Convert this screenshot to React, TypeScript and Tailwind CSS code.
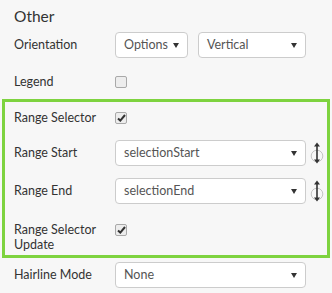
const font = { fontFamily: 'Lato, "Open Sans", "Liberation Sans", sans-serif' };

function Caret() {
  return (
    <svg width="6" height="5" viewBox="0 0 6 5" className="shrink-0">
      <polygon points="0,0 6,0 3,5" fill="#333" />
    </svg>
  );
}

function Select({ value, className }: { value: string; className: string }) {
  return (
    <div
      className={`flex h-[26px] items-center justify-between rounded-[4px] border border-[#cccccc] bg-white pl-[8px] pr-[8px] text-[12.5px] text-[#555] ${className}`}
    >
      <span>{value}</span>
      <Caret />
    </div>
  );
}

function Check({ checked }: { checked?: boolean }) {
  return (
    <div className="flex h-[12px] w-[12px] items-center justify-center rounded-[2px] border border-[#a9a9a9] bg-[#ededed]">
      {checked && (
        <svg width="9" height="8" viewBox="0 0 9 8">
          <path d="M1 4.5 L3.3 6.6 L8 1" stroke="#333" strokeWidth="2" fill="none" />
        </svg>
      )}
    </div>
  );
}

function SwapIcon() {
  return (
    <svg width="16" height="22" viewBox="0 0 16 22" className="ml-[3px] shrink-0">
      <circle cx="8" cy="14" r="5.8" fill="none" stroke="#c4c4c4" strokeWidth="1" />
      <line x1="8" y1="3" x2="8" y2="19" stroke="#333" strokeWidth="1.6" />
      <polygon points="5,4.5 11,4.5 8,0.5" fill="#333" />
      <polygon points="5,17.5 11,17.5 8,21.5" fill="#333" />
    </svg>
  );
}

function Label({ children }: { children: React.ReactNode }) {
  return <div className="w-[101px] shrink-0 text-[12.5px] text-[#333]">{children}</div>;
}

export default function App() {
  return (
    <div className="h-[293px] w-[332px] bg-[#f7f7f7]" style={font}>
      <div className="h-[32px] pl-[14px] pt-[6px] text-[15.5px] leading-[20px] text-[#333]">Other</div>

      <div className="flex h-[26px] items-center pl-[14px]">
        <Label>Orientation</Label>
        <Select value="Options" className="w-[73px]" />
        <Select value="Vertical" className="ml-[10px] w-[108px]" />
      </div>

      <div className="mt-[18px] flex h-[12px] items-center pl-[14px]">
        <Label>Legend</Label>
        <Check />
      </div>

      <div className="mx-[2px] mt-[11px] border-[3px] border-[#7ed33f] pb-[3px] pl-[9px] pt-[4px]">
        <div className="flex h-[24px] items-center">
          <Label>Range Selector</Label>
          <Check checked />
        </div>
        <div className="mt-[10px] flex h-[26px] items-center">
          <Label>Range Start</Label>
          <Select value="selectionStart" className="w-[191px]" />
          <SwapIcon />
        </div>
        <div className="mt-[12px] flex h-[26px] items-center">
          <Label>Range End</Label>
          <Select value="selectionEnd" className="w-[191px]" />
          <SwapIcon />
        </div>
        <div className="mt-[18px] flex items-start">
          <Label>
            <div className="leading-[15px]">Range Selector</div>
            <div className="leading-[15px]">Update</div>
          </Label>
          <div className="pt-[2px]">
            <Check checked />
          </div>
        </div>
      </div>

      <div className="mt-[4px] flex h-[26px] items-center pl-[14px]">
        <Label>Hairline Mode</Label>
        <Select value="None" className="w-[191px]" />
      </div>
    </div>
  );
}
